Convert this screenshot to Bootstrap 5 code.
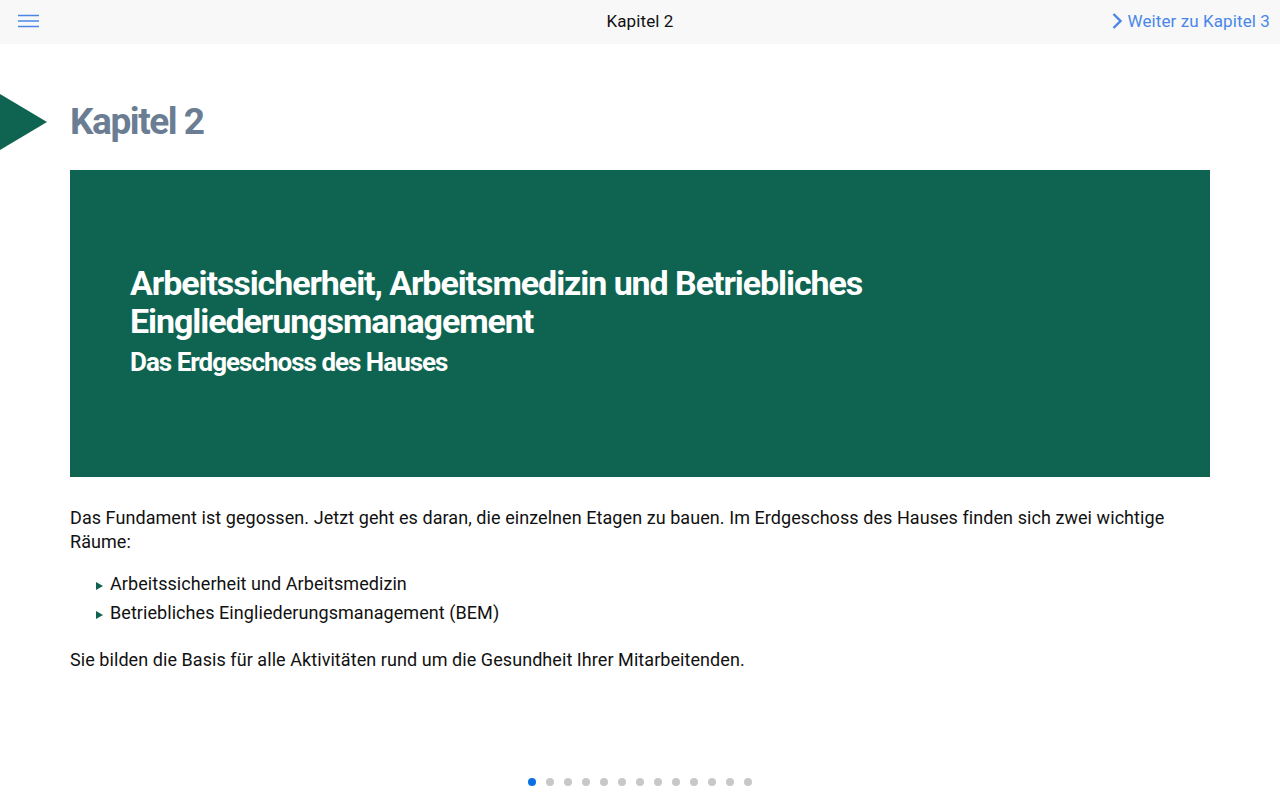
<!DOCTYPE html>
<html lang="de">
<head>
<meta charset="utf-8">
<title>Kapitel 2</title>
<link rel="stylesheet" href="https://cdn.jsdelivr.net/npm/bootstrap@5.3.0/dist/css/bootstrap.min.css">
<style>
html, body { height: 800px; overflow: hidden; }
body { font-family: Roboto, "Liberation Sans", sans-serif; font-size: 18px; line-height: 24px; color: #111; background: #fff; }
.topbar { height: 44px; background: #f8f8f8; padding: 0 10px 2px; }
.topbar-side { width: 300px; }
.menu-btn { width: 21px; height: 14px; border: 0; padding: 0; background: none; line-height: 0; margin: -1px 0 0 8px; }
.topbar-title { font-size: 17px; letter-spacing: .1px; color: #111; }
.next-link { font-size: 17px; color: #4a86e8; text-decoration: none; letter-spacing: .1px; gap: 5px; }
.page-body { padding: 50px 70px 0; position: relative; height: 756px; }
.chapter-mark { position: absolute; left: 0; top: 50px; width: 47px; height: 56px; background: #0f6451; clip-path: polygon(0 0, 100% 50%, 0 100%); }
.chapter-head { font-size: 37px; line-height: 54px; font-weight: 700; color: #6b7d92; letter-spacing: -1.45px; margin: 0 0 22px; padding-top: 1px; height: 54px; }
.hero-box { height: 307px; background: #0f6451; color: #fff; padding: 94px 60px 0; margin-bottom: 29px; }
.hero-title { font-size: 34px; line-height: 38px; font-weight: 700; letter-spacing: -1.07px; margin: 0 0 3px; }
.hero-sub { font-size: 26px; line-height: 38px; font-weight: 700; letter-spacing: -1px; margin: 0; }
.body-copy { margin: 0 0 15px; letter-spacing: .065px; }
.bullet-list { list-style: none; margin: 0 0 21px; padding: 0 0 0 40px; }
.bullet-list li { position: relative; line-height: 29px; letter-spacing: .065px; }
.bullet-list li::before { content: ""; position: absolute; left: -14px; top: 13px; border-left: 7px solid #0f6451; border-top: 4px solid transparent; border-bottom: 4px solid transparent; }
.pager-dots { position: absolute; left: 0; right: 0; top: 734px; gap: 10px; }
.pager-dot { width: 8px; height: 8px; border-radius: 50%; background: #c8c8c8; }
.pager-dot.is-current { background: #0a6fe0; }
</style>
</head>
<body>
<nav class="topbar d-flex align-items-center justify-content-between">
  <div class="topbar-side d-flex align-items-center">
    <button class="menu-btn" type="button" aria-label="Menü">
      <svg width="21" height="14" viewBox="0 0 21 14"><path d="M0 1.5h21M0 7h21M0 12.5h21" stroke="#4a86e8" stroke-width="1.4" fill="none"/></svg>
    </button>
  </div>
  <div class="topbar-title">Kapitel 2</div>
  <div class="topbar-side d-flex align-items-center justify-content-end">
    <a class="next-link d-flex align-items-center" href="#">
      <svg width="10" height="16" viewBox="0 0 10 16"><path d="M1.5 1l7 7-7 7" stroke="#4a86e8" stroke-width="2.4" fill="none"/></svg>
      <span>Weiter zu Kapitel 3</span>
    </a>
  </div>
</nav>
<main class="page-body">
  <div class="chapter-mark"></div>
  <h1 class="chapter-head">Kapitel 2</h1>
  <section class="hero-box">
    <h2 class="hero-title">Arbeitssicherheit, Arbeitsmedizin und Betriebliches<br>Eingliederungsmanagement</h2>
    <p class="hero-sub">Das Erdgeschoss des Hauses</p>
  </section>
  <p class="body-copy">Das Fundament ist gegossen. Jetzt geht es daran, die einzelnen Etagen zu bauen. Im Erdgeschoss des Hauses finden sich zwei wichtige Räume:</p>
  <ul class="bullet-list">
    <li>Arbeitssicherheit und Arbeitsmedizin</li>
    <li>Betriebliches Eingliederungsmanagement (BEM)</li>
  </ul>
  <p class="body-copy">Sie bilden die Basis für alle Aktivitäten rund um die Gesundheit Ihrer Mitarbeitenden.</p>
  <div class="pager-dots d-flex justify-content-center">
    <span class="pager-dot is-current"></span><span class="pager-dot"></span><span class="pager-dot"></span><span class="pager-dot"></span><span class="pager-dot"></span><span class="pager-dot"></span><span class="pager-dot"></span><span class="pager-dot"></span><span class="pager-dot"></span><span class="pager-dot"></span><span class="pager-dot"></span><span class="pager-dot"></span><span class="pager-dot"></span>
  </div>
</main>
<script src="https://cdn.jsdelivr.net/npm/bootstrap@5.3.0/dist/js/bootstrap.bundle.min.js"></script>
</body>
</html>
